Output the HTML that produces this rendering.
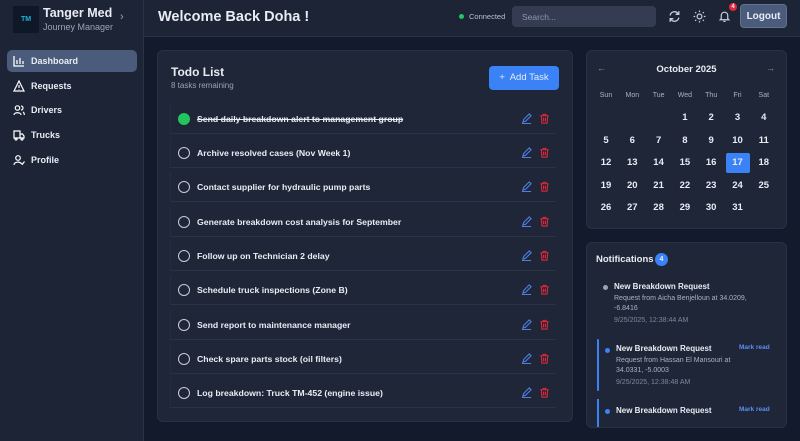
<!DOCTYPE html>
<html><head><meta charset="utf-8"><style>
*{box-sizing:border-box;margin:0;padding:0}
body{width:800px;height:441px;overflow:hidden;background:#131a2b;font-family:"Liberation Sans",sans-serif;color:#e8ecf3;position:relative}
.side{position:absolute;left:0;top:0;width:144px;height:441px;background:#1d2436;border-right:1px solid #2a3246}
.logo{position:absolute;left:13px;top:6px;width:26px;height:27px;background:#0f1826;color:#1bb3d6;font-size:7px;font-weight:bold;text-align:center;line-height:27px}
.brand{position:absolute;left:43px;top:6px;font-weight:bold;font-size:12.5px}
.brand small{display:block;font-weight:normal;font-size:9px;color:#9aa3b5;margin-top:2px}
.chev{position:absolute;left:120px;top:11px;color:#9aa3b5;font-size:11px}
.nav{position:absolute;left:7px;width:130px;height:22px;border-radius:5px;font-size:9px;font-weight:bold;padding-left:24px;line-height:22px}
.nav svg{position:absolute;left:6px;top:5px}
.nav.act{background:#4a5b7c}
.hdr{position:absolute;left:144px;top:0;width:656px;height:37px;background:#1d2436;border-bottom:1px solid #2a3246}
.hdr h1{position:absolute;left:14px;top:9px;font-size:14.5px}
.conn{position:absolute;left:315px;top:12px;font-size:7.5px;color:#b8c0cf}
.conn i{display:inline-block;width:5px;height:5px;border-radius:50%;background:#22c55e;margin-right:5px}
.search{position:absolute;left:368px;top:6px;width:144px;height:21px;background:#333c51;border-radius:4px;font-size:8.5px;color:#8e97aa;padding:6px 10px}
.logout{position:absolute;left:596px;top:4px;width:47px;height:24px;background:#4a5b7c;border-radius:4px;font-size:10px;font-weight:bold;text-align:center;line-height:24px;border:1px solid #61718f}
.card{position:absolute;background:#1f2638;border-radius:6px;border:1px solid #283044}
.row{position:absolute;left:170px;width:386px;height:30px;border-bottom:1px solid #2a3246;border-left:1px solid #262d40;font-size:8.7px;font-weight:bold;line-height:30px;padding-left:26px}
.row .c{position:absolute;left:7px;top:9px;width:12px;height:12px;border:1.5px solid #c8cdd8;border-radius:50%}
.cal{position:absolute;left:595px;top:92px;width:182px;font-size:7px;color:#aab2c2}
.cal div{position:absolute;width:26px;text-align:center}
.d{font-size:9.5px;color:#e8ecf3;font-weight:bold}
.n{position:absolute;font-size:8px;font-weight:bold}
.n p{font-weight:normal;color:#aab2c2;font-size:7px;margin-top:3px;line-height:10px}
.n span{display:block;font-weight:normal;color:#7e879a;font-size:7px;margin-top:3px}
.mr{position:absolute;font-size:6.5px;color:#5b8ef0;font-weight:bold}
</style></head><body>
<div class="side">
<div class="logo">TM</div>
<div class="brand">Tanger Med<small>Journey Manager</small></div>
<div class="chev">›</div>
<div class="nav act" style="top:50px"><svg width="12" height="12" viewBox="0 0 12 12" fill="none" stroke="#fff" stroke-width="1.3"><path d="M1 1v10h10M4 9V5M7 9V3M10 9V6"/></svg>Dashboard</div>
<div class="nav" style="top:75px"><svg width="12" height="12" viewBox="0 0 12 12" fill="none" stroke="#fff" stroke-width="1.2"><path d="M6 1L11 11H1Z M6 5v3M6 9.5v.5"/></svg>Requests</div>
<div class="nav" style="top:99px"><svg width="12" height="12" viewBox="0 0 12 12" fill="none" stroke="#fff" stroke-width="1.2"><circle cx="4.5" cy="4" r="2.2"/><path d="M1 11c0-3 7-3 7 0M8 2a2 2 0 010 4M10 8c1 .5 1.3 1.5 1.3 3"/></svg>Drivers</div>
<div class="nav" style="top:124px"><svg width="12" height="12" viewBox="0 0 12 12" fill="none" stroke="#fff" stroke-width="1.2"><path d="M1 2h6v7H1zM7 5h2.5L11 7v2H7"/><circle cx="3" cy="10" r="1"/><circle cx="9" cy="10" r="1"/></svg>Trucks</div>
<div class="nav" style="top:149px"><svg width="12" height="12" viewBox="0 0 12 12" fill="none" stroke="#fff" stroke-width="1.2"><circle cx="5" cy="4" r="2.3"/><path d="M1 11c0-3.5 6-3.5 7-1.5M8 9l1.3 1.3L11.5 7.5"/></svg>Profile</div>
</div>
<div class="hdr">
<h1>Welcome Back Doha !</h1>
<div class="conn"><i></i>Connected</div>
<div class="search">Search...</div>
<svg style="position:absolute;left:524px;top:10px" width="13" height="13" viewBox="0 0 12 12" fill="none" stroke="#c8cdd8" stroke-width="1.2"><path d="M2 5a4 4 0 017-2l1 1M10 7a4 4 0 01-7 2L2 8M10 1v3H7M2 11V8h3"/></svg>
<svg style="position:absolute;left:549px;top:10px" width="13" height="13" viewBox="0 0 12 12" fill="none" stroke="#c8cdd8" stroke-width="1.1"><circle cx="6" cy="6" r="2.2"/><path d="M6 0.5v1.5M6 10v1.5M0.5 6h1.5M10 6h1.5M2 2l1 1M9 9l1 1M2 10l1-1M9 3l1-1"/></svg>
<svg style="position:absolute;left:574px;top:10px" width="13" height="13" viewBox="0 0 12 12" fill="none" stroke="#c8cdd8" stroke-width="1.1"><path d="M3 8V5a3 3 0 016 0v3l1 1H2zM5 10.5h2"/></svg>
<div style="position:absolute;left:585px;top:3px;width:8px;height:8px;border-radius:50%;background:#e0283a;font-size:6px;text-align:center;line-height:8px;font-weight:bold">4</div>
<div class="logout">Logout</div>
</div>
<div class="card" style="left:157px;top:50px;width:416px;height:372px"></div>
<div style="position:absolute;left:171px;top:65px;font-size:12px;font-weight:bold">Todo List</div>
<div style="position:absolute;left:171px;top:81px;font-size:8px;color:#9aa3b5">8 tasks remaining</div>
<div style="position:absolute;left:489px;top:66px;width:70px;height:24px;background:#3b82f6;border-radius:4px;font-size:9.5px;text-align:center;line-height:24px">+&nbsp; Add Task</div>
<div class="row" style="top:104px;text-decoration:line-through"><div class="c" style="background:#22c55e;border-color:#22c55e"></div>Send daily breakdown alert to management group</div>
<div class="row" style="top:138px"><div class="c"></div>Archive resolved cases (Nov Week 1)</div>
<div class="row" style="top:172px"><div class="c"></div>Contact supplier for hydraulic pump parts</div>
<div class="row" style="top:207px"><div class="c"></div>Generate breakdown cost analysis for September</div>
<div class="row" style="top:241px"><div class="c"></div>Follow up on Technician 2 delay</div>
<div class="row" style="top:275px"><div class="c"></div>Schedule truck inspections (Zone B)</div>
<div class="row" style="top:310px"><div class="c"></div>Send report to maintenance manager</div>
<div class="row" style="top:344px"><div class="c"></div>Check spare parts stock (oil filters)</div>
<div class="row" style="top:378px"><div class="c"></div>Log breakdown: Truck TM-452 (engine issue)</div>
<div id="icons"></div>
<script>
var h='';[113,147,181,216,250,284,319,353,387].forEach(function(y){h+='<svg style="position:absolute;left:521px;top:'+y+'px" width="11" height="11" viewBox="0 0 12 12" fill="none" stroke="#4f7fe6" stroke-width="1.2"><path d="M2 10l1-3 6-6 2 2-6 6zM1 11.5h10"/></svg><svg style="position:absolute;left:539px;top:'+y+'px" width="11" height="11" viewBox="0 0 12 12" fill="none" stroke="#e0283a" stroke-width="1.2"><path d="M1.5 3h9M4.5 3V1.5h3V3M2.5 3l.7 8h5.6l.7-8M5 5v4M7 5v4"/></svg>';});document.getElementById('icons').innerHTML=h;
</script>
<div class="card" style="left:586px;top:50px;width:201px;height:179px"></div>
<div style="position:absolute;left:597px;top:63px;font-size:9px;color:#8e97aa">←</div>
<div style="position:absolute;left:766px;top:63px;font-size:9px;color:#8e97aa">→</div>
<div style="position:absolute;left:586px;top:64px;width:201px;text-align:center;font-size:9.5px;font-weight:bold">October 2025</div>
<div class="cal" id="cal"></div>
<script>
var c='',dn=['Sun','Mon','Tue','Wed','Thu','Fri','Sat'];
for(var i=0;i<7;i++)c+='<div style="left:'+(i*26.3-2)+'px;top:0">'+dn[i]+'</div>';
for(var d=1;d<=31;d++){var p=d+2,col=p%7,r=Math.floor(p/7);var st=d==17?'background:#3b82f6;border-radius:2px;height:20px;line-height:20px;width:24px;margin-left:1px;':'line-height:20px;';c+='<div class="d" style="left:'+(col*26.3-2)+'px;top:'+(16+r*22.5)+'px;'+st+'">'+d+'</div>';}
document.getElementById('cal').innerHTML=c;
</script>
<div class="card" style="left:586px;top:242px;width:201px;height:186px;overflow:hidden">
<div style="position:absolute;left:9px;top:11px;font-size:9.5px;font-weight:bold;line-height:12px">Notifications</div>
<div style="position:absolute;left:68px;top:10px;width:13px;height:13px;border-radius:50%;background:#3b82f6;font-size:7px;text-align:center;line-height:13px;font-weight:bold">4</div>
<div style="position:absolute;left:16px;top:42px;width:5px;height:5px;border-radius:50%;background:#9aa3b5"></div>
<div class="n" style="left:27px;top:39px">New Breakdown Request<p>Request from Aicha Benjelloun at 34.0209,<br>-6.8416</p><span>9/25/2025, 12:38:44 AM</span></div>
<div style="position:absolute;left:10px;top:96px;width:2px;height:52px;background:#3b82f6;border-radius:2px"></div>
<div style="position:absolute;left:18px;top:105px;width:5px;height:5px;border-radius:50%;background:#3b82f6"></div>
<div class="n" style="left:29px;top:101px">New Breakdown Request<p>Request from Hassan El Mansouri at<br>34.0331, -5.0003</p><span>9/25/2025, 12:38:48 AM</span></div>
<div class="mr" style="left:152px;top:101px">Mark read</div>
<div style="position:absolute;left:10px;top:156px;width:2px;height:30px;background:#3b82f6"></div>
<div style="position:absolute;left:18px;top:166px;width:5px;height:5px;border-radius:50%;background:#3b82f6"></div>
<div class="n" style="left:29px;top:163px">New Breakdown Request</div>
<div class="mr" style="left:152px;top:163px">Mark read</div>
</div>
</body></html>
